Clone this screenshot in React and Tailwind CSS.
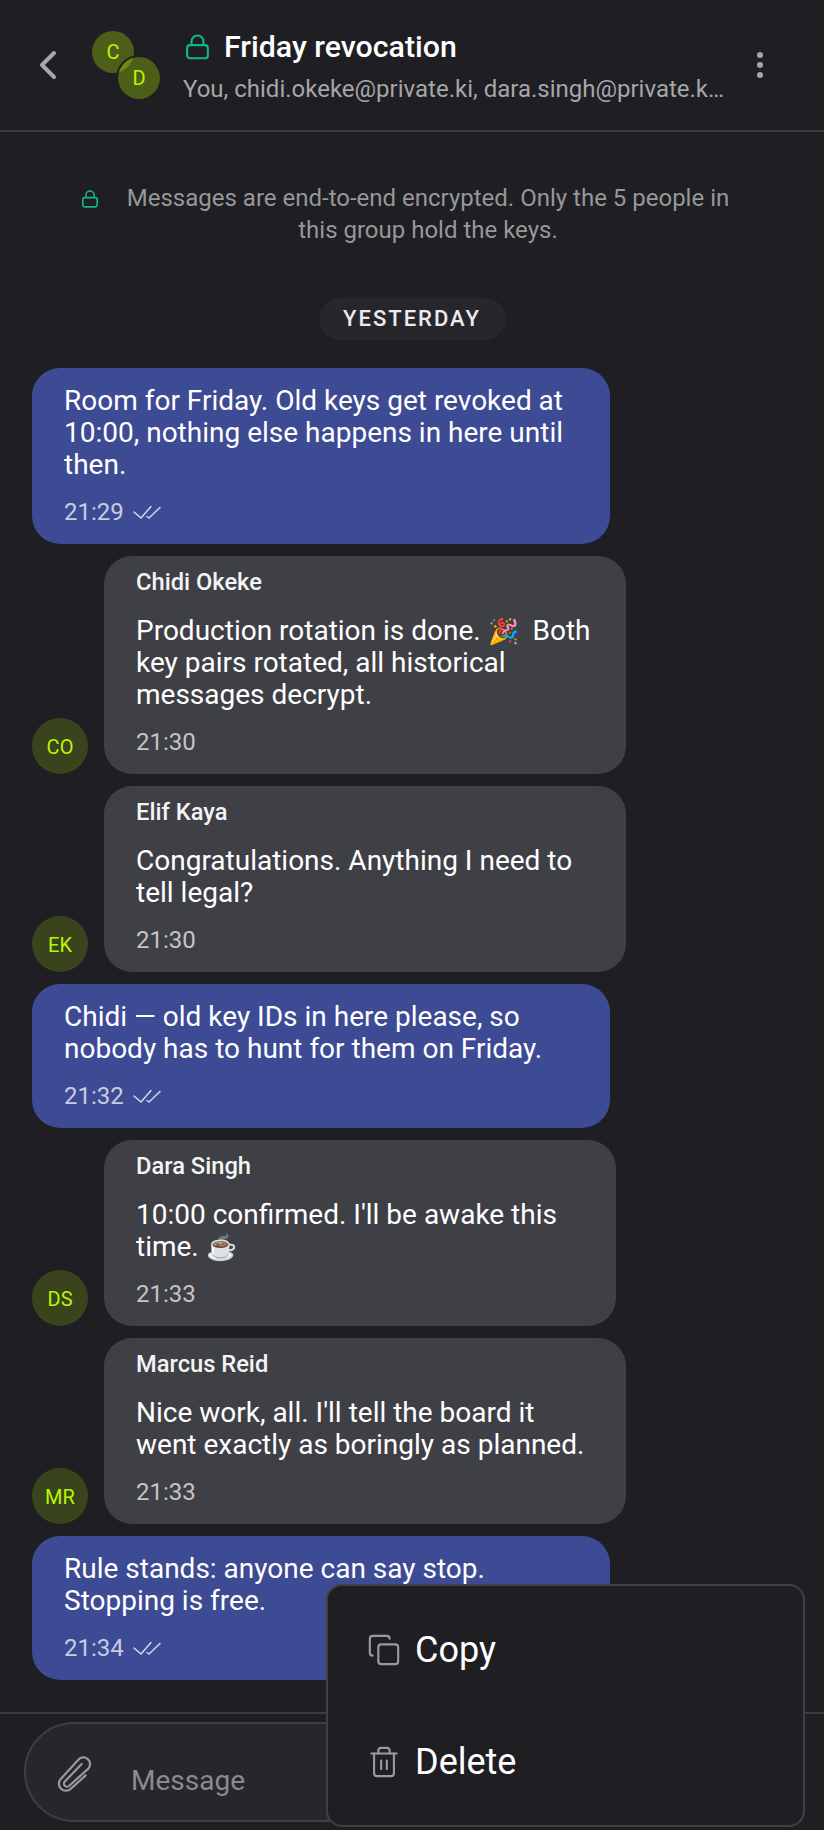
import React from "react";
import { Copy, Trash2, ChevronLeft } from "lucide-react";

const font = { fontFamily: "Roboto, 'Noto Sans', sans-serif" };

function Lock({ className, sw = 2.2 }) {
  return (
    <svg viewBox="0 0 24 26" fill="none" stroke="currentColor" strokeWidth={sw} strokeLinejoin="round" className={className}>
      <rect x="1.2" y="11" width="21.6" height="13.8" rx="3" />
      <path d="M5.8 11V7.2a6.2 6.2 0 0 1 12.4 0V11" />
    </svg>
  );
}

function Checks() {
  return (
    <svg viewBox="0 0 28 16" fill="none" stroke="currentColor" strokeWidth="1.5" strokeLinecap="round" strokeLinejoin="round" className="h-[16px] w-[28px] text-[#d5d8ea]">
      <path d="M1 8l7 6L18 2.5" />
      <path d="M14 12.5l2 1.5L27 3.5" />
    </svg>
  );
}

function Emoji({ children }) {
  return <span className="text-[25px] leading-[0]">{children}</span>;
}

function Sent({ lines, time }) {
  return (
    <div className="w-[578px] rounded-[28px] bg-[#3d4a94] pb-[16px] pl-[32px] pr-[16px] pt-[17px]">
      <div className="text-[28px] leading-[32px] text-white">
        {lines.map((l, i) => <div key={i}>{l}</div>)}
      </div>
      <div className="mt-[15px] flex items-center gap-[9px] text-[24px] leading-[32px] text-[#c9cce0]">
        <span>{time}</span>
        <Checks />
      </div>
    </div>
  );
}

function Received({ initials, name, lines, time, width }) {
  return (
    <div className="flex items-end gap-[16px]">
      <div className="flex h-[56px] w-[56px] shrink-0 items-center justify-center rounded-full bg-[#b9f500]/18 pt-[1px] text-[20px] text-[#b9f500]">
        {initials}
      </div>
      <div className={`rounded-[28px] bg-[#3f3f46] pb-[16px] pl-[32px] pr-[16px] pt-[10px] ${width}`}>
        <div className="text-[23.7px] font-medium leading-[32px] text-[#f4f4f5]">{name}</div>
        <div className="mt-[17px] text-[28px] leading-[32px] text-white">
          {lines.map((l, i) => <div key={i} className="h-[32px]">{l}</div>)}
        </div>
        <div className="mt-[15px] text-[24px] leading-[32px] text-[#c4c4c8]">{time}</div>
      </div>
    </div>
  );
}

export default function App() {
  return (
    <div style={font} className="relative flex h-[1830px] w-[824px] flex-col overflow-hidden bg-[#1e1e23]">
      <header className="flex h-[132px] shrink-0 items-center border-b-2 border-[#3c3c41] pl-[28px]">
        <ChevronLeft className="-ml-[4px] h-[48px] w-[48px] shrink-0 text-[#a8a8aa]" strokeWidth={2} />
        <div className="relative ml-[20px] h-[68px] w-[70px] shrink-0">
          <div className="absolute left-0 top-0 flex h-[42px] w-[42px] items-center justify-center rounded-full bg-[#b9f500]/30 text-[20px] text-[#b9f500]">C</div>
          <div className="absolute left-[26px] top-[26px] flex h-[42px] w-[42px] items-center justify-center rounded-full bg-[#b9f500]/30 text-[20px] text-[#b9f500] shadow-[0_0_0_2px_#1e1e23]">D</div>
        </div>
        <div className="ml-[21px] flex w-[544px] min-w-0 flex-col">
          <div className="flex items-center gap-[15px]">
            <Lock className="ml-[3px] h-[26px] w-[23px] shrink-0 text-[#10b981]" />
            <span className="text-[30.3px] font-medium leading-[40px] text-white">Friday revocation</span>
          </div>
          <div className="mt-[7px] truncate text-[24px] leading-[30px] text-[#a6a6a9]">You, chidi.okeke@private.ki, dara.singh@private.ki, elif.kaya@private.ki</div>
        </div>
        <div className="ml-[30px] flex flex-col gap-[4px]">
          <span className="h-[6px] w-[6px] rounded-full bg-[#a8a8aa]" />
          <span className="h-[6px] w-[6px] rounded-full bg-[#a8a8aa]" />
          <span className="h-[6px] w-[6px] rounded-full bg-[#a8a8aa]" />
        </div>
      </header>

      <div className="flex min-h-0 flex-1 flex-col px-[32px]">
        <div className="ml-[50px] mt-[50px] flex items-start gap-[28px] text-[24px] leading-[32px] text-[#97979a]">
          <Lock className="mt-[8px] h-[18px] w-[16px] shrink-0 text-[#10b981]" sw={2.4} />
          <div className="w-[604px] text-center">
            <div>Messages are end-to-end encrypted. Only the 5 people in</div>
            <div>this group hold the keys.</div>
          </div>
        </div>
        <div className="mt-[52px] flex justify-center">
          <div className="flex h-[42px] w-[187px] items-center justify-center rounded-full bg-[#27272b] pb-[1px] text-[22px] font-medium tracking-[2px] text-[#ececee]">YESTERDAY</div>
        </div>
        <div className="mt-[28px] flex flex-col gap-[12px]">
          <Sent lines={["Room for Friday. Old keys get revoked at", "10:00, nothing else happens in here until", "then."]} time="21:29" />
          <Received initials="CO" name="Chidi Okeke" width="w-[522px]" time="21:30" lines={[<>Production rotation is done. <Emoji>🎉</Emoji>{"\u00a0 "}Both</>, "key pairs rotated, all historical", "messages decrypt."]} />
          <Received initials="EK" name="Elif Kaya" width="w-[522px]" time="21:30" lines={["Congratulations. Anything I need to", "tell legal?"]} />
          <Sent lines={["Chidi — old key IDs in here please, so", "nobody has to hunt for them on Friday."]} time="21:32" />
          <Received initials="DS" name="Dara Singh" width="w-[512px]" time="21:33" lines={["10:00 confirmed. I'll be awake this", <>time. <Emoji>☕</Emoji></>]} />
          <Received initials="MR" name="Marcus Reid" width="w-[522px]" time="21:33" lines={["Nice work, all. I'll tell the board it", "went exactly as boringly as planned."]} />
          <Sent lines={["Rule stands: anyone can say stop.", "Stopping is free."]} time="21:34" />
        </div>
      </div>

      <footer className="h-[118px] shrink-0 border-t-2 border-[#3c3c41] px-[24px] pt-[8px]">
        <div className="flex h-[100px] items-center rounded-[50px] border-2 border-[#3f3f44] bg-[#26262b] pl-[15px]">
          <svg viewBox="0 0 210 180" fill="none" stroke="currentColor" strokeWidth="6.5" strokeLinecap="round" strokeLinejoin="round" className="h-[60px] w-[70px] shrink-0 text-[#9a9a9c]">
            <path d="M134 100L90 140A21 21 0 0 1 60 110L112 53A20 20 0 0 1 142 80L84 132A9 9 0 0 1 72 118L122 66" />
          </svg>
          <span className="ml-[20px] mt-[18px] text-[28px] text-[#8b8b8e]">Message</span>
        </div>
      </footer>

      <div className="absolute left-[326px] top-[1584px] flex h-[243px] w-[479px] flex-col justify-center rounded-[16px] border-2 border-[#3f3f44] bg-[#1e1e23] pl-[39px]">
        <div className="flex h-[112px] items-center gap-[14px] text-[36px] text-white">
          <Copy className="h-[34px] w-[34px] text-[#9a9a9c]" strokeWidth={1.5} />
          <span>Copy</span>
        </div>
        <div className="flex h-[112px] items-center gap-[14px] text-[36px] text-white">
          <Trash2 className="h-[34px] w-[34px] text-[#9a9a9c]" strokeWidth={1.5} />
          <span>Delete</span>
        </div>
      </div>
    </div>
  );
}
